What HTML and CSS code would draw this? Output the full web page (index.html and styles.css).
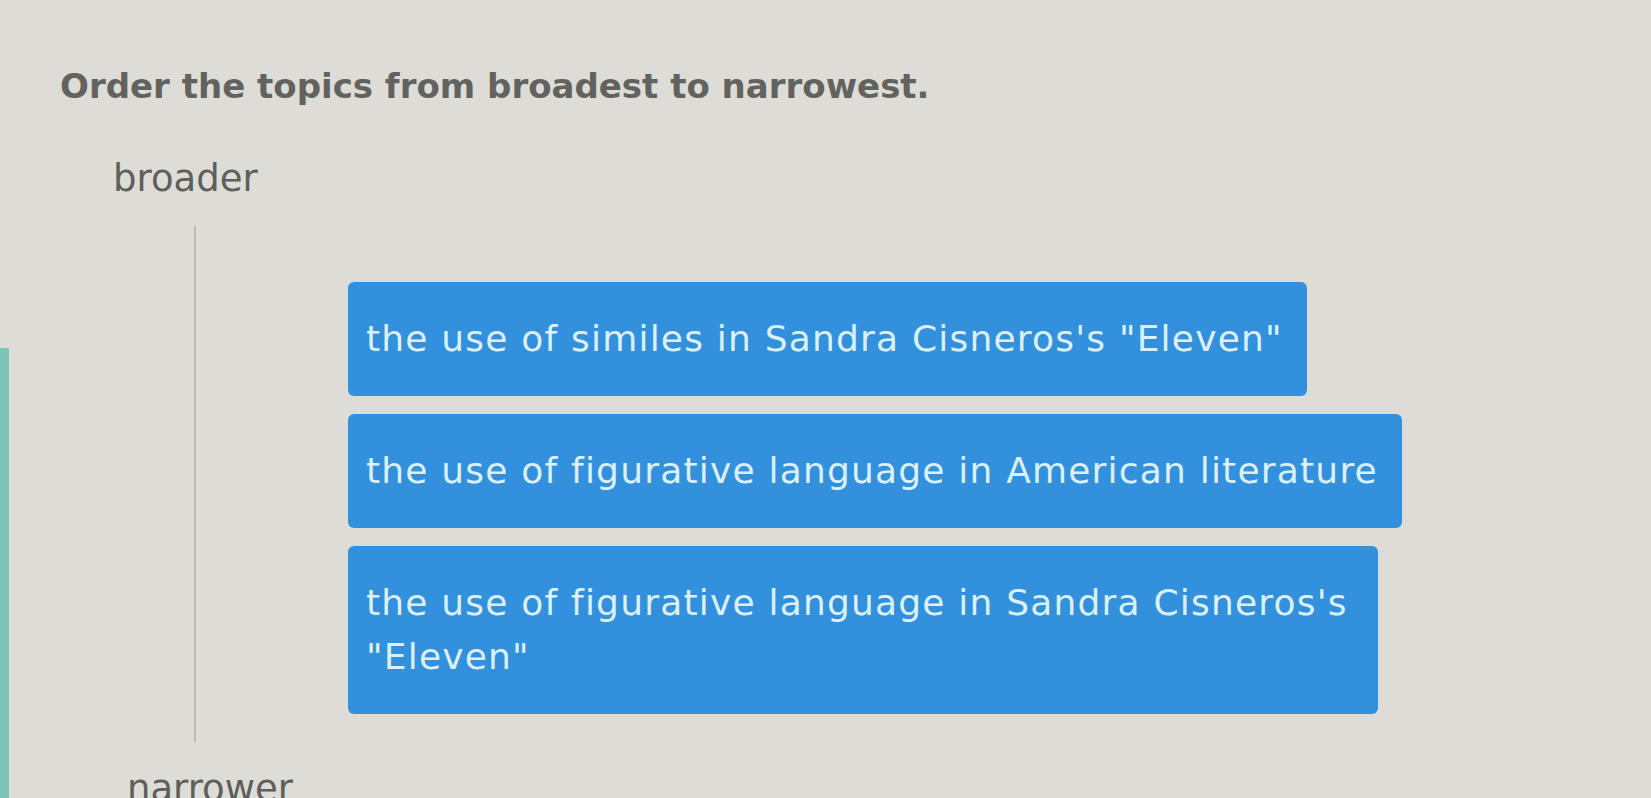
FILE: index.html
```html
<!DOCTYPE html>
<html lang="en">
<head>
    <meta charset="UTF-8">
    <meta name="viewport" content="width=device-width, initial-scale=1.0">
    <title>Order the topics</title>
    <link rel="stylesheet" href="styles.css">
</head>
<body>

    <div class="question">
        <h1 class="prompt">Order the topics from broadest to narrowest.</h1>

        <div class="end-label broader">broader</div>

        <div class="sort-list">
            <div class="topic">the use of similes in Sandra Cisneros's "Eleven"</div>
            <div class="topic">the use of figurative language in American literature</div>
            <div class="topic topic-wrap">the use of figurative language in Sandra Cisneros's "Eleven"</div>
        </div>

        <div class="end-label narrower">narrower</div>
    </div>

</body>
</html>
```

FILE: styles.css
```css
body {
    margin: 0;
    padding: 0;
    font-family: "DejaVu Sans", Verdana, sans-serif;
    background-color: #dddcd6;
    /* edge of the sidebar peeking in on the left */
    background-image: linear-gradient(to right, #7cc4b8 0, #7cc4b8 9px, transparent 9px);
    background-repeat: no-repeat;
    background-position: 0 348px;
    overflow: hidden;
}

.question {
    padding-top: 66px;
}

.prompt {
    margin: 0 0 0 60px;
    font-size: 34px;
    font-weight: bold;
    line-height: 40px;
    color: #62625e;
}

.end-label {
    font-size: 37px;
    line-height: 44px;
    color: #5e5e5b;
}

.broader {
    margin: 51px 0 0 113px;
}

.narrower {
    margin: 25px 0 0 127px;
}


.sort-list {
    margin: 25px 0 0 194px;
    border-left: 2px solid #bcbcb6;
    padding: 56px 0 28px 152px;
    display: flex;
    flex-direction: column;
    align-items: flex-start;
    gap: 18px;
}

.topic {
    max-width: 1080px;
    padding: 30px 24px 30px 18px;
    font-size: 36px;
    line-height: 54px;
    letter-spacing: 1.2px;
    color: #dcf0fb;
    background-color: #3290dc;
    border-radius: 6px;
    box-sizing: border-box;
}

.topic-wrap {
    max-width: 1030px;
}
```
